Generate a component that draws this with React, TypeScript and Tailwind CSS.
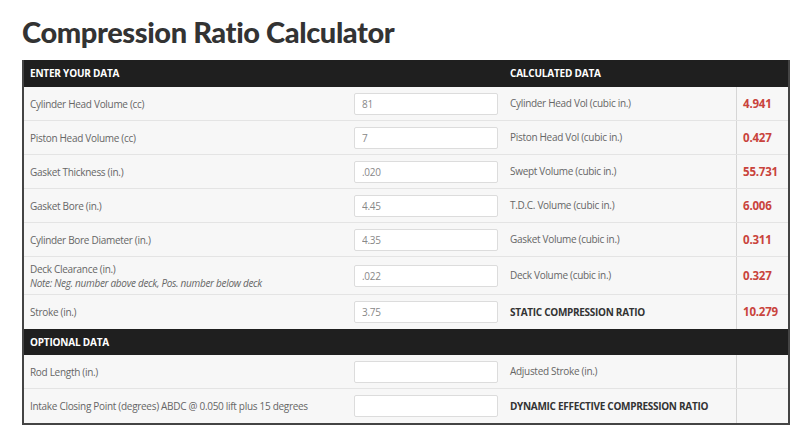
const rows = [
  { label: "Cylinder Head Volume (cc)", value: "81", calc: "Cylinder Head Vol (cubic in.)", result: "4.941" },
  { label: "Piston Head Volume (cc)", value: "7", calc: "Piston Head Vol (cubic in.)", result: "0.427" },
  { label: "Gasket Thickness (in.)", value: ".020", calc: "Swept Volume (cubic in.)", result: "55.731" },
  { label: "Gasket Bore (in.)", value: "4.45", calc: "T.D.C. Volume (cubic in.)", result: "6.006" },
  { label: "Cylinder Bore Diameter (in.)", value: "4.35", calc: "Gasket Volume (cubic in.)", result: "0.311" },
  {
    label: "Deck Clearance (in.)",
    note: "Note: Neg. number above deck, Pos. number below deck",
    value: ".022",
    calc: "Deck Volume (cubic in.)",
    result: "0.327",
    tall: true,
  },
  { label: "Stroke (in.)", value: "3.75", calc: "STATIC COMPRESSION RATIO", result: "10.279", strong: true },
];

const optional = [
  { label: "Rod Length (in.)", value: "", calc: "Adjusted Stroke (in.)", result: "" },
  {
    label: "Intake Closing Point (degrees) ABDC @ 0.050 lift plus 15 degrees",
    value: "",
    calc: "DYNAMIC EFFECTIVE COMPRESSION RATIO",
    result: "",
    strong: true,
  },
];

type Row = {
  label: string;
  note?: string;
  value: string;
  calc: string;
  result: string;
  tall?: boolean;
  strong?: boolean;
};

function DataRow({ row, last }: { row: Row; last?: boolean }) {
  return (
    <div
      className={`grid grid-cols-[321px_160px_231px_1fr] items-center bg-[#f7f7f7] ${
        row.tall ? "h-[38px]" : "h-[34px]"
      } ${last ? "" : "border-b border-[#e4e4e4]"}`}
    >
      <div className="pl-[6px] leading-[14px] whitespace-nowrap">
        <div>{row.label}</div>
        {row.note && <div className="italic">{row.note}</div>}
      </div>
      <div className="pl-[9px]">
        <input
          readOnly
          value={row.value}
          className="w-[144px] h-[22px] bg-white border border-[#dcdcdc] rounded-[2px] px-[7px] text-[10px] tracking-[-0.3px] text-[#888] outline-none font-['Open_Sans',sans-serif]"
        />
      </div>
      <div
        className={`pl-[5px] h-full flex items-center whitespace-nowrap ${
          row.strong ? "font-bold text-[#333]" : ""
        }`}
      >
        {row.calc}
      </div>
      <div className="h-full flex items-center pl-[6px] border-l border-[#d6d6d6] font-bold text-[11.5px] tracking-[-0.2px] text-[#c9433c]">
        {row.result}
      </div>
    </div>
  );
}

export default function App() {
  return (
    <div className="w-[800px] h-[435px] bg-white pt-[14px] font-['Open_Sans',sans-serif] text-[10px] tracking-[-0.3px] text-[#666]">
      <h1 className="ml-[22px] font-['Lato',sans-serif] font-black text-[29px] leading-[36px] tracking-[-0.4px] text-[#333]">
        Compression Ratio Calculator
      </h1>
      <div className="mt-[10px] ml-[22px] w-[768px] border-2 border-t-0 border-[#444]">
        <div className="grid grid-cols-[321px_160px_231px_1fr] items-center h-[27px] bg-[#1f1f1f] text-white font-bold text-[10px] tracking-[-0.2px] uppercase">
          <div className="pl-[6px]">Enter your data</div>
          <div />
          <div className="pl-[5px]">Calculated data</div>
          <div />
        </div>
        {rows.map((r, i) => (
          <DataRow key={i} row={r} last={i === rows.length - 1} />
        ))}
        <div className="flex items-center h-[26px] bg-[#1f1f1f] text-white font-bold text-[10px] tracking-[-0.2px] uppercase pl-[6px]">
          Optional data
        </div>
        {optional.map((r, i) => (
          <DataRow key={i} row={r} last={i === optional.length - 1} />
        ))}
      </div>
    </div>
  );
}
